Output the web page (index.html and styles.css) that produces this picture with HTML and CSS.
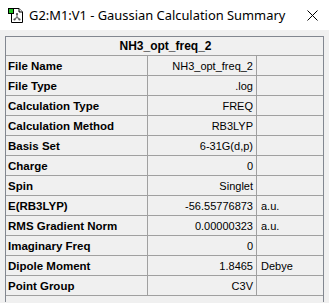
FILE: index.html
```html
<!DOCTYPE html>
<html>
<head>
<meta charset="utf-8">
<link rel="stylesheet" href="styles.css">
</head>
<body>
<div class="titlebar">
  <svg class="appicon" width="16" height="16" viewBox="0 0 16 16">
    <path d="M3.5 1.5 H11 L14.5 5 V15.5 H3.5 Z" fill="#fff" stroke="#000" stroke-width="1"/>
    <path d="M11 1.5 V5 H14.5" fill="#e8e8e8" stroke="#000" stroke-width="1"/>
    <rect x="0.5" y="1.5" width="5" height="5" fill="#22c322" stroke="#000" stroke-width="1"/>
    <path d="M9 7 V10 M9 10 L6.5 12.5 M9 10 L11.5 12.5" stroke="#707070" stroke-width="1.2" fill="none"/>
    <circle cx="9" cy="7" r="1.1" fill="#505050"/>
    <circle cx="6.5" cy="12.5" r="1.1" fill="#505050"/>
    <circle cx="11.5" cy="12.5" r="1.1" fill="#505050"/>
  </svg>
  <span class="title">G2:M1:V1 - Gaussian Calculation Summary</span>
  <svg class="close" width="11" height="11" viewBox="0 0 11 11">
    <path d="M0.5 0.5 L10.5 10.5 M10.5 0.5 L0.5 10.5" stroke="#000" stroke-width="1"/>
  </svg>
</div>
<div class="content">
  <div class="grid">
    <div class="head">NH3_opt_freq_2</div>
    <div class="lab">File Name</div><div class="val">NH3_opt_freq_2</div><div class="unit"></div>
    <div class="lab">File Type</div><div class="val">.log</div><div class="unit"></div>
    <div class="lab">Calculation Type</div><div class="val">FREQ</div><div class="unit"></div>
    <div class="lab">Calculation Method</div><div class="val">RB3LYP</div><div class="unit"></div>
    <div class="lab">Basis Set</div><div class="val">6-31G(d,p)</div><div class="unit"></div>
    <div class="lab">Charge</div><div class="val">0</div><div class="unit"></div>
    <div class="lab">Spin</div><div class="val">Singlet</div><div class="unit"></div>
    <div class="lab">E(RB3LYP)</div><div class="val">-56.55776873</div><div class="unit">a.u.</div>
    <div class="lab">RMS Gradient Norm</div><div class="val">0.00000323</div><div class="unit">a.u.</div>
    <div class="lab">Imaginary Freq</div><div class="val">0</div><div class="unit"></div>
    <div class="lab">Dipole Moment</div><div class="val">1.8465</div><div class="unit">Debye</div>
    <div class="lab">Point Group</div><div class="val">C3V</div><div class="unit"></div>
  </div>
</div>
</body>
</html>
```

FILE: styles.css
```css
html, body {
  margin: 0;
  padding: 0;
  background: #f0f0f0;
  height: 303px;
  overflow: hidden;
}
.titlebar {
  height: 30px;
  background: #ffffff;
  display: flex;
  align-items: center;
}
.appicon {
  margin-left: 8px;
  margin-top: -1px;
  flex: none;
}
.title {
  margin-left: 5px;
  font-family: "Noto Sans", "Open Sans", sans-serif;
  font-size: 12.9px;
  color: #000;
}
.close {
  margin-left: auto;
  margin-right: 11px;
  flex: none;
}
.content {
  padding: 6px 5px 0 5px;
}
.grid {
  width: 317px;
  height: 265px;
  border: 1px solid #828790;
  border-bottom: none;
  display: grid;
  grid-template-columns: 142px 109px 66px;
  grid-auto-rows: 20px;
  grid-template-rows: 19px;
  align-content: start;
  font-family: "Liberation Sans", Arial, sans-serif;
  font-size: 11px;
  color: #000;
}
.head {
  grid-column: 1 / 4;
  border-bottom: 1px solid #a0a0a0;
  font-weight: bold;
  font-size: 12px;
  display: flex;
  align-items: center;
  justify-content: center;
  padding-left: 2px;
}
.lab, .val, .unit {
  border-bottom: 1px solid #a0a0a0;
  display: flex;
  align-items: center;
  white-space: nowrap;
}
.lab {
  border-right: 1px solid #a0a0a0;
  font-weight: bold;
  padding-left: 2px;
  font-size: 11.5px;
}
.val {
  border-right: 1px solid #a0a0a0;
  justify-content: flex-end;
  padding-right: 3px;
}
.unit {
  padding-left: 4px;
}
```
